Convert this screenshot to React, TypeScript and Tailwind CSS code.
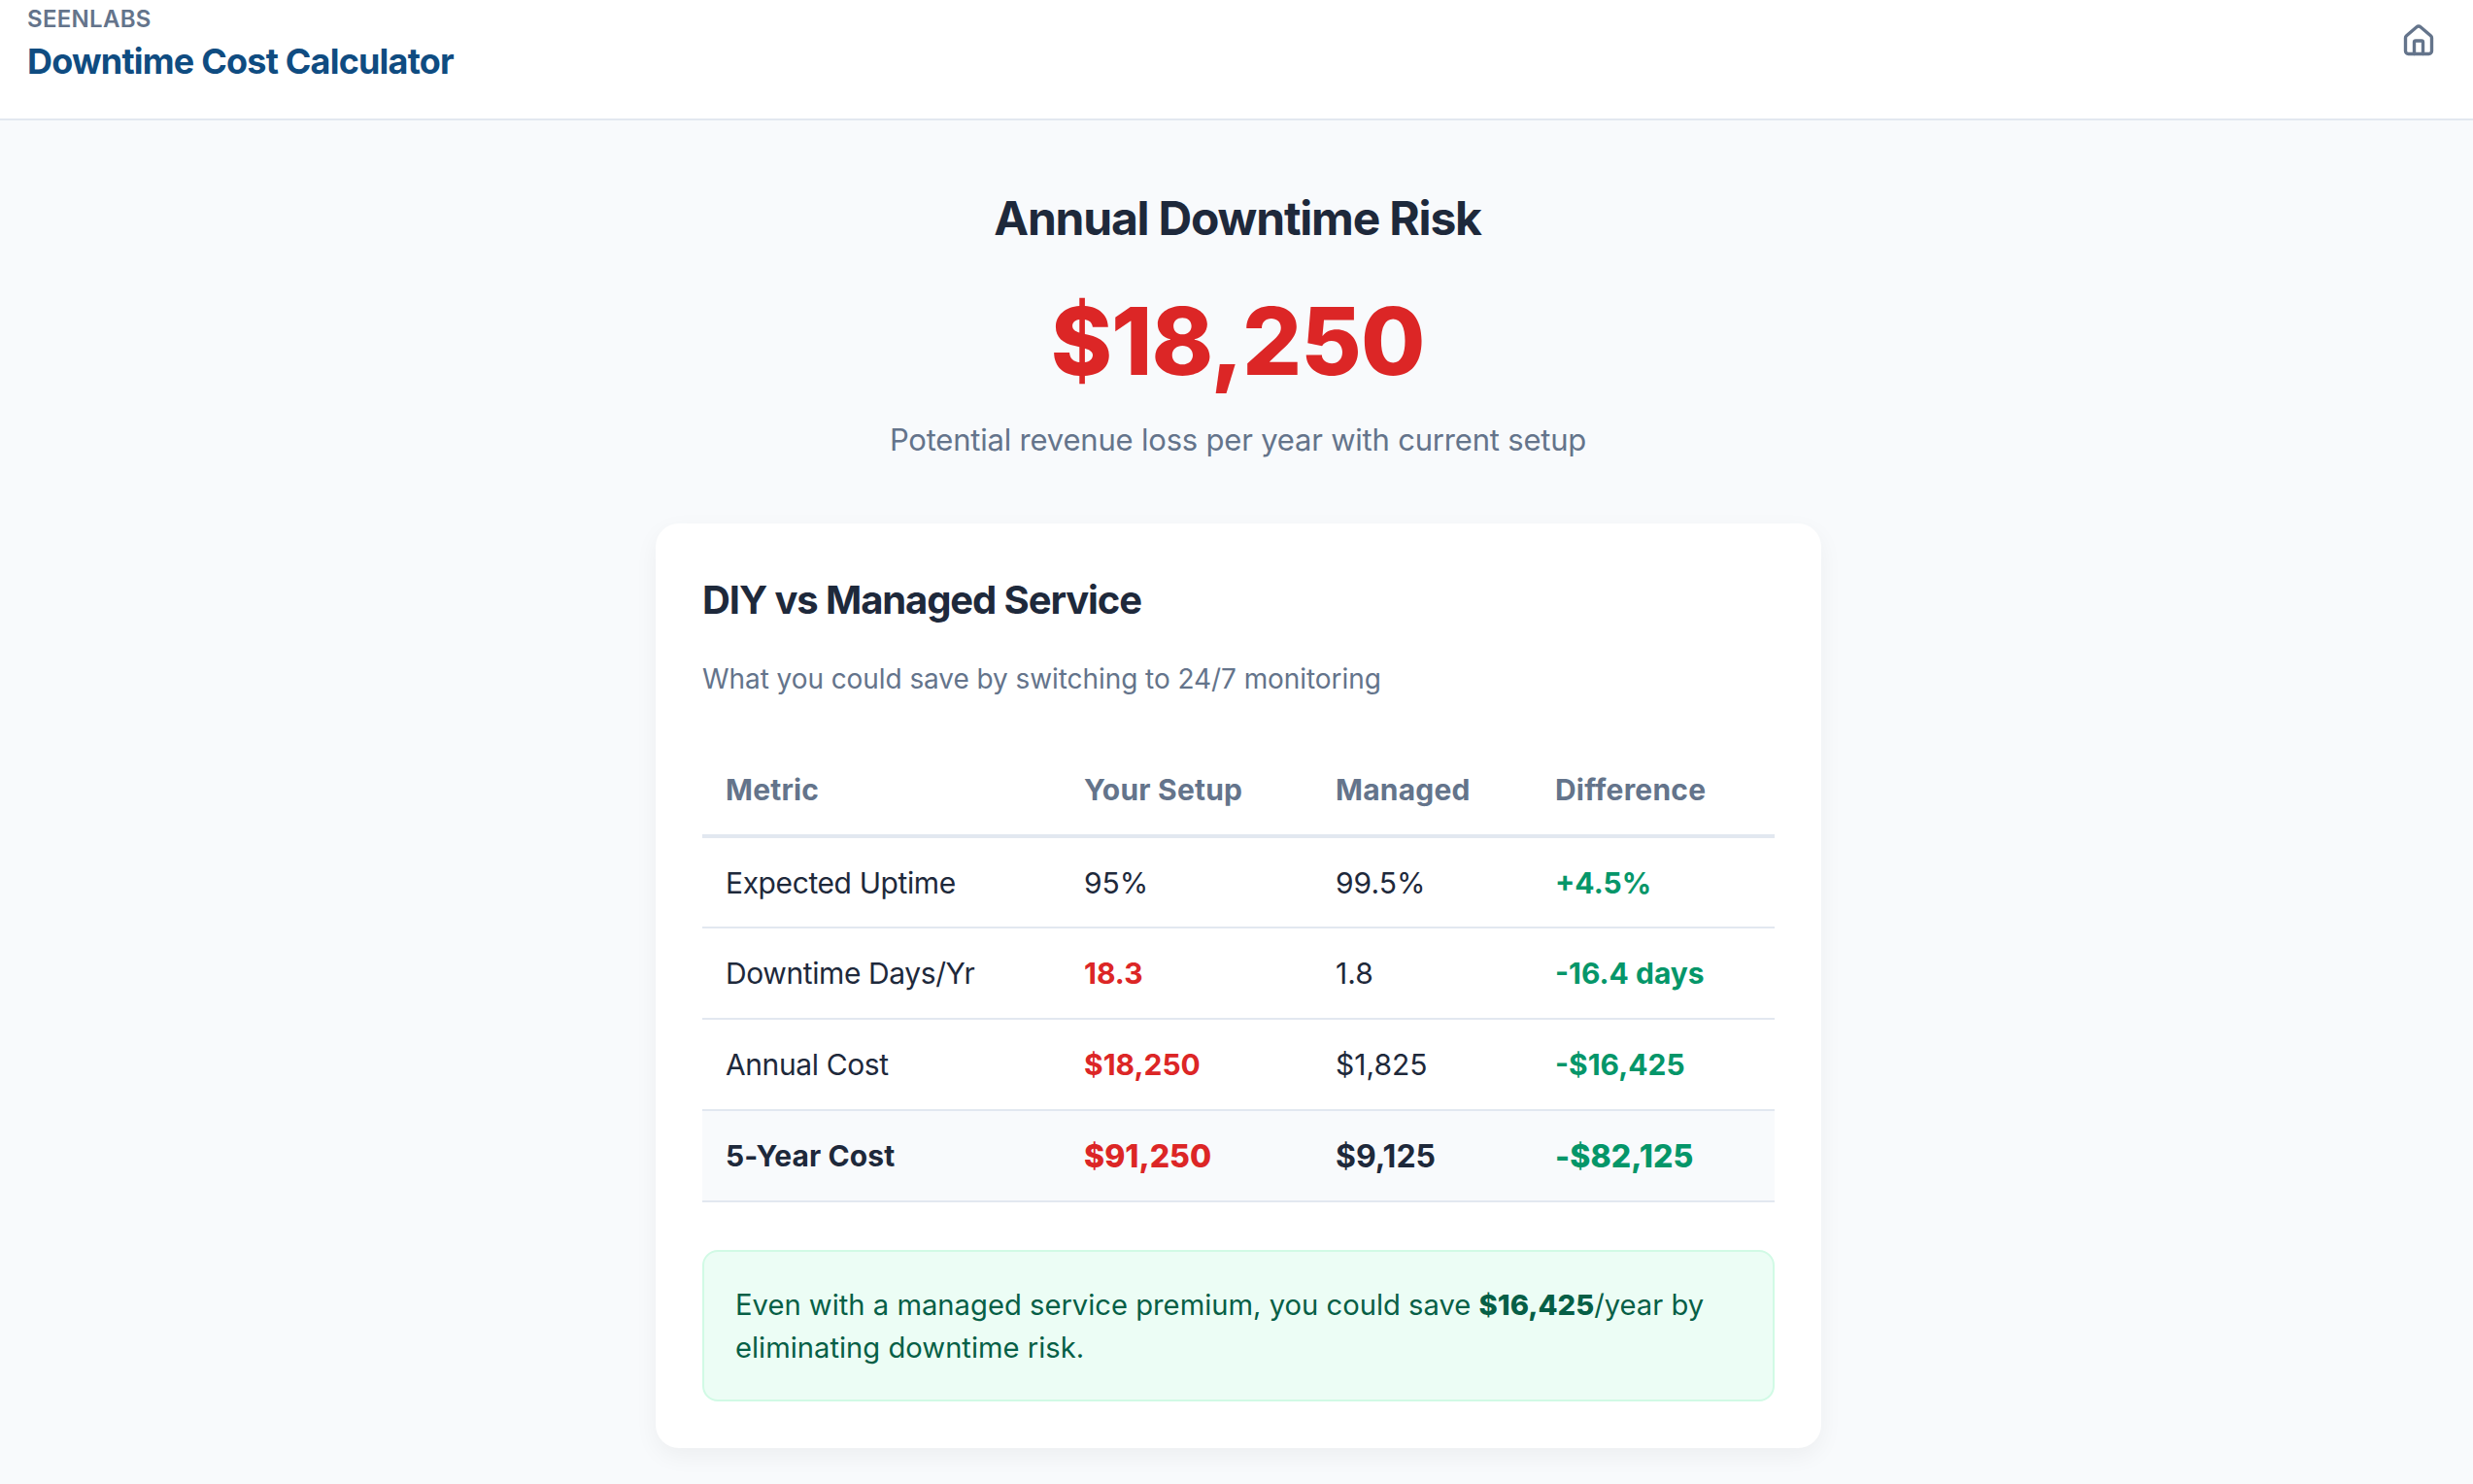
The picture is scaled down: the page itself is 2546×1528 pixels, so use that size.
import { Home } from "lucide-react";

const rows = [
  ["Expected Uptime", "95%", "99.5%", "+4.5%", false],
  ["Downtime Days/Yr", "18.3", "1.8", "-16.4 days", true],
  ["Annual Cost", "$18,250", "$1,825", "-$16,425", true],
  ["5-Year Cost", "$91,250", "$9,125", "-$82,125", true],
] as const;

export default function App() {
  return (
    <div className="bg-[#f8fafc] font-['Inter',sans-serif] text-[#1e293b] overflow-hidden h-[1528px]">
      <header className="h-[124px] bg-white border-b-2 border-[#e2e8f0] pl-[28px] pr-[38px] flex justify-between items-start">
        <div>
          <div className="text-[24px] leading-[38px] mt-[1px] tracking-[0.3px] font-semibold text-[#64748b]">SEENLABS</div>
          <h1 className="text-[36px] leading-[44px] tracking-[-0.8px] font-bold text-[#0f4c81] mt-[2px]">Downtime Cost Calculator</h1>
        </div>
        <Home className="mt-[24px] text-[#64748b]" size={36} strokeWidth={2.25} />
      </header>
      <main className="flex flex-col items-center pl-[4px]">
        <h2 className="text-[48px] leading-[58px] tracking-[-1.2px] font-bold mt-[72px] -ml-[2px]">Annual Downtime Risk</h2>
        <div className="text-[96px] leading-[116px] tracking-[-1px] font-extrabold text-[#dc2626] mt-[39px] -ml-[2px]">$18,250</div>
        <p className="text-[31px] leading-[40px] tracking-[-0.2px] text-[#64748b] mt-[24px] -ml-[1px]">Potential revenue loss per year with current setup</p>
        <section className="w-[1200px] mt-[66px] bg-white rounded-[24px] p-[48px] shadow-[0_8px_24px_rgba(0,0,0,0.05)]">
          <h3 className="text-[40px] leading-[48px] tracking-[-1.1px] font-bold mt-[7px]">DIY vs Managed Service</h3>
          <p className="text-[28px] leading-[40px] tracking-[-0.07px] text-[#64748b] mt-[37px]">What you could save by switching to 24/7 monitoring</p>
          <table className="w-[1104px] table-fixed border-collapse mt-[48px] text-[30px]">
            <colgroup>
              <col className="w-[369px]" />
              <col className="w-[259px]" />
              <col className="w-[226px]" />
              <col className="w-[250px]" />
            </colgroup>
            <thead>
              <tr className="h-[94px] border-b-[4px] border-[#e2e8f0] text-left text-[#64748b]">
                {["Metric", "Your Setup", "Managed", "Difference"].map((h) => (
                  <th key={h} className="px-[24px] pt-[1px] font-bold text-[30px] tracking-[0.2px]">{h}</th>
                ))}
              </tr>
            </thead>
            <tbody>
              {rows.map((r, i) => {
                const last = i === 3;
                return (
                  <tr key={r[0]} className={`h-[94px] border-b-2 border-[#e2e8f0] ${last ? "bg-[#f8fafc] font-bold" : ""}`}>
                    <td className={`px-[24px] pt-[1px] ${last ? "tracking-[0.1px]" : "tracking-[-0.4px]"}`}>{r[0]}</td>
                    <td className={`px-[24px] pt-[1px] ${r[4] ? "text-[#dc2626] font-bold" : ""} ${last ? "font-extrabold text-[32px]" : ""}`}>{r[1]}</td>
                    <td className={`px-[24px] pt-[1px] ${last ? "text-[32px]" : ""}`}>{r[2]}</td>
                    <td className={`px-[24px] pt-[1px] text-[#059669] font-bold ${last ? "font-extrabold text-[32px] tracking-[0.1px]" : ""}`}>{r[3]}</td>
                  </tr>
                );
              })}
            </tbody>
          </table>
          <div className="mt-[49px] h-[156px] rounded-[16px] border-2 border-[#d1fae5] bg-[#ecfdf5] px-[32px] pt-[33px] text-[29.2px] leading-[44px] text-[#065f46]">
            Even with a managed service premium, you could save <strong className="font-extrabold">$16,425</strong>/year by eliminating downtime risk.
          </div>
        </section>
      </main>
    </div>
  );
}
